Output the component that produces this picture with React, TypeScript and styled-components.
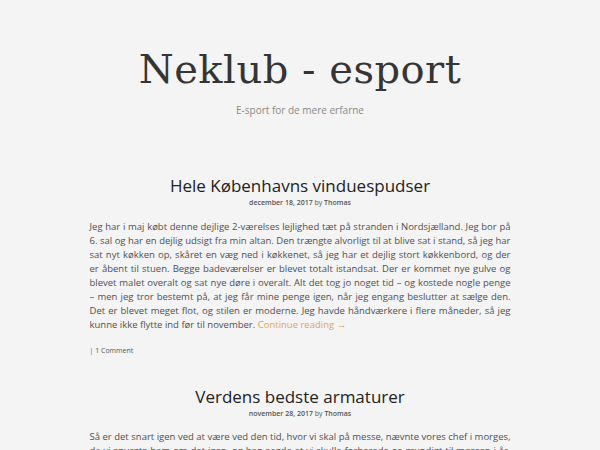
import React from "react";
import styled, { createGlobalStyle } from "styled-components";

const Global = createGlobalStyle`
  html, body { margin: 0; padding: 0; background: #f4f4f4; }
  body { font-family: "Open Sans", "Noto Sans", sans-serif; color: #555; }
`;

const Page = styled.div`
  width: 600px;
  display: flex;
  flex-direction: column;
  align-items: center;
`;

const Header = styled.header`
  display: flex;
  flex-direction: column;
  align-items: center;
  padding-top: 43px;
  padding-bottom: 57px;
`;

const SiteTitle = styled.h1`
  margin: 0;
  font-family: "DejaVu Serif", "Liberation Serif", serif;
  font-weight: normal;
  font-size: 40px;
  line-height: 52px;
  color: #353535;
  letter-spacing: 0.5px;
`;

const Tagline = styled.p`
  margin: 8px 0 0;
  font-size: 10px;
  line-height: 14px;
  color: #8a8a8a;
`;

const Main = styled.main`
  width: 421px;
  display: flex;
  flex-direction: column;
  gap: 28px;
`;

const Article = styled.article`
  display: flex;
  flex-direction: column;
`;

const PostTitle = styled.h2`
  margin: 0;
  text-align: center;
  font-weight: normal;
  font-size: 17px;
  line-height: 24px;
  color: #222;
`;

const Meta = styled.div`
  text-align: center;
  font-size: 7px;
  line-height: 10px;
  color: #555;
  font-weight: 600;
  b { font-weight: 400; }
`;

const Body = styled.p`
  margin: 11.5px 0 0;
  font-size: 9.5px;
  line-height: 14.1px;
  text-align: justify;
  color: #505050;
`;

const More = styled.a`
  color: #e5a34a;
  text-decoration: none;
`;

const Footer = styled.div`
  margin-top: 12.5px;
  font-size: 7px;
  line-height: 12px;
  color: #555;
`;

const posts = [
  {
    title: "Hele Københavns vinduespudser",
    date: "december 18, 2017",
    body:
      "Jeg har i maj købt denne dejlige 2-værelses lejlighed tæt på stranden i Nordsjælland. Jeg bor på 6. sal og har en dejlig udsigt fra min altan. Den trængte alvorligt til at blive sat i stand, så jeg har sat nyt køkken op, skåret en væg ned i køkkenet, så jeg har et dejlig stort køkkenbord, og der er\u00a0åbent til stuen. Begge badeværelser er blevet totalt istandsat. Der er kommet nye gulve og blevet malet overalt og sat nye døre i overalt. Alt det tog jo noget tid – og kostede nogle penge – men jeg tror bestemt på, at jeg får mine penge igen, når jeg engang beslutter at sælge den. Det er blevet meget flot, og stilen er moderne. Jeg havde håndværkere i flere måneder, så jeg kunne ikke flytte ind før til november.",
    footer: true,
  },
  {
    title: "Verdens bedste armaturer",
    date: "november 28, 2017",
    body:
      "Så er det snart igen ved at være ved den tid, hvor vi skal på messe, nævnte vores chef i morges, da vi spurgte ham om det igen, og han sagde at vi skulle forberede os grundigt til messen i år, fordi den er vigtig for os.",
    footer: false,
  },
];

export default function App() {
  return (
    <Page>
      <Global />
      <Header>
        <SiteTitle>Neklub - esport</SiteTitle>
        <Tagline>E-sport for de mere erfarne</Tagline>
      </Header>
      <Main>
        {posts.map((p) => (
          <Article key={p.title}>
            <PostTitle>{p.title}</PostTitle>
            <Meta>
              {p.date} <b>by</b> Thomas
            </Meta>
            <Body>
              {p.body} {p.footer && <More href="#">Continue reading →</More>}
            </Body>
            {p.footer && <Footer>| 1 Comment</Footer>}
          </Article>
        ))}
      </Main>
    </Page>
  );
}
